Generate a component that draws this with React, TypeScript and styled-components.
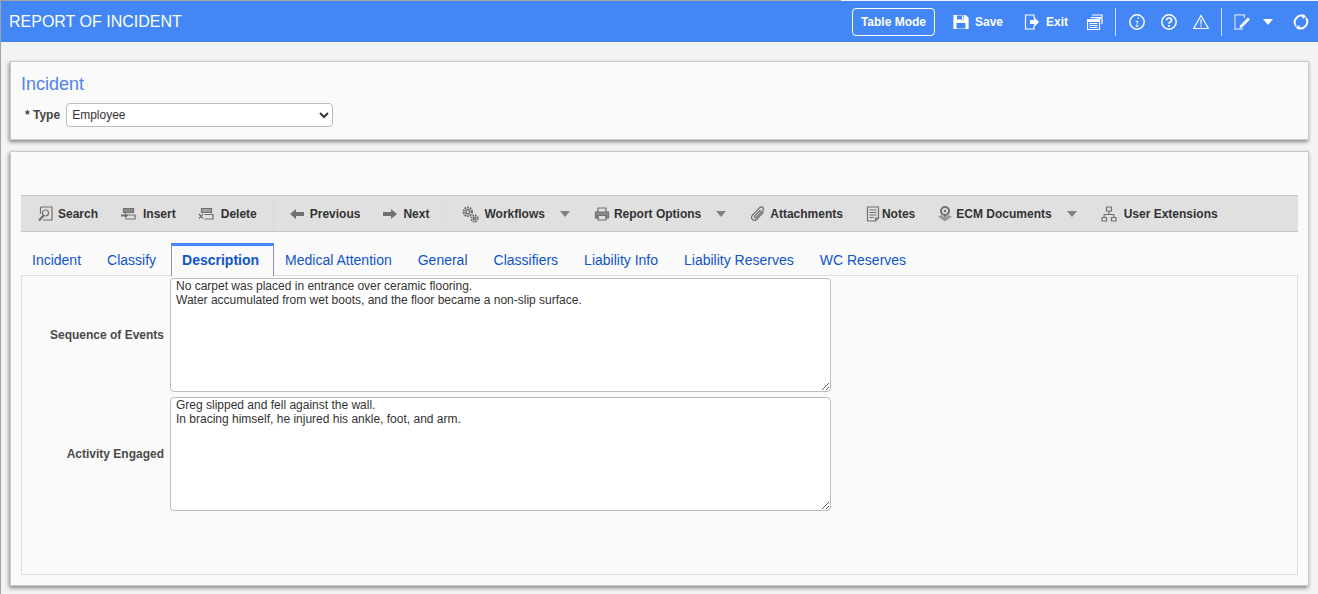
import React from "react";
import styled, { createGlobalStyle } from "styled-components";

const Global = createGlobalStyle`
  html, body { margin: 0; padding: 0; height: 100%; background: #f2f3f5; overflow: hidden; }
  body { font-family: "Liberation Sans", Arial, sans-serif; }
`;

const Page = styled.div`
  position: relative;
  height: 594px;
  box-sizing: border-box;
  border-left: 1px solid #a3a3a3;
  padding-top: 1px;
  background: #f2f3f5;
  &::before {
    content: "";
    position: absolute;
    left: 0;
    top: 0;
    width: 840px;
    height: 1px;
    background: #a3a3a3;
  }
`;

const Header = styled.header`
  height: 41px;
  background: #4287f5;
  display: flex;
  align-items: center;
  justify-content: space-between;
  color: #fff;
`;
const Title = styled.h1`
  margin: 0 0 0 8px;
  font-size: 16px;
  font-weight: 400;
  letter-spacing: 0;
`;
const HeaderTools = styled.div`
  display: flex;
  align-items: center;
  padding-right: 9px;
`;
const ModeButton = styled.button`
  box-sizing: border-box;
  width: 83px;
  height: 28px;
  padding: 0;
  margin-right: 18px;
  border: 1px solid #fff;
  border-radius: 4px;
  background: transparent;
  color: #fff;
  font: 700 12px "Liberation Sans", Arial, sans-serif;
`;
const HeaderAction = styled.span<{ $mr: number }>`
  display: flex;
  align-items: center;
  gap: 6px;
  margin-right: ${(p) => p.$mr}px;
  font-size: 12px;
  font-weight: 700;
`;
const HeaderDivider = styled.span<{ $mr: number }>`
  width: 1px;
  height: 28px;
  background: #cfe0fb;
  margin-right: ${(p) => p.$mr}px;
`;
const WhiteCaret = styled.span`
  width: 0;
  height: 0;
  margin-right: 20px;
  border-left: 5px solid transparent;
  border-right: 5px solid transparent;
  border-top: 6px solid #fff;
`;

const Panel = styled.section<{ $top: number }>`
  box-sizing: border-box;
  margin: ${(p) => p.$top}px 9px 0 9px;
  background: #fafafa;
  border: 1px solid #c9c9c9;
  box-shadow: -1px 2px 4px rgba(0, 0, 0, 0.45);
`;
const TypePanel = styled(Panel)`
  height: 79px;
  padding: 12px 10px 0;
`;
const MainPanel = styled(Panel)`
  height: 435px;
  padding: 43px 10px 0;
`;
const Heading = styled.h2`
  margin: 0;
  font-size: 18px;
  line-height: 20px;
  font-weight: 400;
  color: #4f83ea;
`;
const TypeRow = styled.div`
  display: flex;
  align-items: center;
  margin-top: 9px;
  padding-left: 4px;
`;
const TypeLabel = styled.label`
  font-size: 12px;
  font-weight: 700;
  color: #444;
  margin-right: 6px;
`;
const TypeSelect = styled.select`
  box-sizing: border-box;
  width: 267px;
  height: 24px;
  padding: 0 1px;
  border: 1px solid #bdbdbd;
  border-radius: 4px;
  background: #fff;
  color: #333;
  font: 12px "Liberation Sans", Arial, sans-serif;
`;

const Toolbar = styled.div`
  box-sizing: border-box;
  height: 37px;
  display: flex;
  align-items: center;
  padding-left: 5px;
  background: #e0e0e0;
  border-top: 1px solid #c6c6c6;
  border-bottom: 1px solid #c6c6c6;
`;
const Tool = styled.span`
  display: flex;
  align-items: center;
  padding: 0 11px;
  font-size: 12px;
  font-weight: 700;
  color: #333;
  white-space: nowrap;
`;
const ToolIcon = styled.span<{ $w: number }>`
  display: flex;
  width: ${(p) => p.$w}px;
`;
const ToolDivider = styled.span`
  width: 1px;
  height: 34px;
  margin: 0 4px 0 5px;
  background: #d8dadd;
`;
const GrayCaret = styled.span`
  width: 0;
  height: 0;
  margin: 1px 13px 0 4px;
  border-left: 5px solid transparent;
  border-right: 5px solid transparent;
  border-top: 6px solid #808080;
`;

const Tabs = styled.nav`
  display: flex;
  align-items: flex-end;
  height: 32px;
  margin-top: 11px;
`;
const Tab = styled.a<{ $active?: boolean }>`
  box-sizing: border-box;
  height: ${(p) => (p.$active ? 33 : 32)}px;
  margin-right: ${(p) => (p.$active ? 0 : 4)}px;
  margin-bottom: ${(p) => (p.$active ? -1 : 0)}px;
  padding: ${(p) => (p.$active ? "6px 14px 0 10px" : "9px 11px 0")};
  font-size: 14px;
  line-height: 16px;
  font-weight: ${(p) => (p.$active ? 700 : 400)};
  color: #0f55c8;
  background: ${(p) => (p.$active ? "#fafafa" : "transparent")};
  border-top: ${(p) => (p.$active ? "3px solid #4287f5" : "none")};
  border-left: ${(p) => (p.$active ? "1px solid #8496ad" : "none")};
  border-right: ${(p) => (p.$active ? "1px solid #8496ad" : "none")};
  position: relative;
`;
const TabBody = styled.div`
  box-sizing: border-box;
  height: 300px;
  padding-top: 2px;
  border: 1px solid #d6dfe8;
  display: grid;
  grid-template-columns: 148px 661px;
  grid-auto-rows: 114px;
  row-gap: 5px;
  align-items: center;
`;
const FieldLabel = styled.label`
  padding-right: 6px;
  text-align: right;
  font-size: 12px;
  font-weight: 700;
  color: #4a4a4a;
`;
const Memo = styled.textarea`
  box-sizing: border-box;
  display: block;
  width: 661px;
  height: 114px;
  padding: 0 5px;
  border: 1px solid #bdbdbd;
  border-radius: 4px;
  background: #fff;
  color: #333;
  font: 12px/14px "Liberation Sans", Arial, sans-serif;
  outline: none;
`;

const Glyph = styled.svg<{ $c: string }>`
  display: block;
  flex: none;
  fill: none;
  stroke: ${(p) => p.$c};
  stroke-width: 1.2;
`;

type IconProps = { c: string; children: React.ReactNode; size?: number };
const I = ({ c, children, size = 16 }: IconProps) => (
  <Glyph $c={c} width={size} height={size} viewBox="0 0 16 16">
    {children}
  </Glyph>
);
const W = "#fff";
const G = "#707070";

const SaveIcon = () => (
  <I c={W}>
    <path d="M1 1.5h11.5L15 4v10.5H1z" fill={W} />
    <path d="M4 1.5h7v4H4z" fill="#4287f5" stroke="none" />
    <path d="M3.5 9h9v5.5h-9z" fill="#4287f5" stroke="none" />
    <path d="M9 2.3h1.5v2.6H9z" fill={W} stroke="none" />
  </I>
);
const ExitIcon = () => (
  <I c={W}>
    <path d="M10 4V1H1.500v14H10v-3" />
    <path d="M6 6h4V3l5 5-5 5v-3H6z" fill={W} stroke="none" />
  </I>
);
const CopyIcon = () => (
  <I c={W}>
    <path d="M5 1h10v9" />
    <path d="M3.500 3.500h10v1.500" fill={W} />
    <path d="M.5 5.500h12v10H.5z" />
    <path d="M.5 5.500h12v2H.5z" fill={W} />
    <path d="M2.500 9.500h8M2.500 11.500h8M2.500 13.500h8" />
  </I>
);
const InfoIcon = () => (
  <I c={W}>
    <circle cx="8" cy="8" r="7.200" strokeWidth="1.500" />
    <path d="M8.700 3.200h1.300v1.500H8.500zM6.500 7h2.700l-1.100 4.800H9.500l-.2 1H6.500l.2-1h.6l.9-3.800h-1z" fill={W} stroke="none" />
  </I>
);
const HelpIcon = () => (
  <I c={W}>
    <circle cx="8" cy="8" r="7.200" strokeWidth="1.500" />
    <path d="M5.500 6.300C5.500 4.800 6.600 4 8 4s2.600.8 2.600 2.200c0 1.800-2.600 1.800-2.600 3.600" strokeWidth="1.700" />
    <path d="M7.100 11h1.800v1.800H7.100z" fill={W} stroke="none" />
  </I>
);
const WarnIcon = () => (
  <I c={W}>
    <path d="M8 1.500 15.300 14.500H.7z" />
    <path d="M7.300 5.500h1.400L8.400 11h-.8zM7.300 11.700h1.400v1.400H7.300z" fill={W} stroke="none" />
  </I>
);
const EditIcon = () => (
  <I c={W}>
    <path d="M10.500 4V.8H1v14.400h8" stroke="#cfe0fb" />
    <path d="M5.500 14.500l.5-3L14 3.500l2 2-8 8z" fill={W} stroke="none" />
  </I>
);
const RefreshIcon = () => (
  <I c={W}>
    <path d="M3 12A6.500 6.500 0 0 1 11 2.300" strokeWidth="2" />
    <path d="M13 4A6.500 6.500 0 0 1 5 13.700" strokeWidth="2" />
    <path d="M9.500 0l4 2.500-4 2.500zM6.500 11l-4 2.500 4 2.500z" fill={W} stroke="none" />
  </I>
);

const SearchIcon = () => (
  <I c={G}>
    <path d="M3.500 1h11.500v13H6" />
    <circle cx="8.500" cy="7" r="3" />
    <path d="M6.500 9.500 2 14.500" strokeWidth="2" />
    <path d="M3.500 1v7" />
  </I>
);
const InsertIcon = () => (
  <I c={G}>
    <path d="M3.500 2.500h10v4h-10z" fill="#8a8a8a" />
    <path d="M6.500 9h8.500v4H5" />
    <path d="M1 8.500h4V6.500l3 3-3 3v-2H1z" fill={G} stroke="none" />
  </I>
);
const DeleteIcon = () => (
  <I c={G}>
    <path d="M3.500 2.500h10v4h-10z" fill="#a0a0a0" />
    <path d="M6.500 8.500h8.500v4.500H6.500" />
    <path d="M1 8l4 4.500M5 8l-4 4.500" />
  </I>
);
const BackIcon = () => (
  <I c={G}>
    <path d="M1 8l6-5v3h8v4H7v3z" fill={G} stroke="none" />
  </I>
);
const ForwardIcon = () => (
  <I c={G}>
    <path d="M15 8 9 3v3H1v4h8v3z" fill={G} stroke="none" />
  </I>
);
const GearsIcon = () => (
  <I c={G} size={18}>
    <circle cx="6" cy="6" r="3.800" strokeWidth="1.800" strokeDasharray="1.600 .8" />
    <circle cx="6" cy="6" r="1.800" />
    <circle cx="12" cy="12" r="2.800" strokeWidth="1.800" strokeDasharray="1.400 .8" />
    <circle cx="12" cy="12" r="1" />
  </I>
);
const PrinterIcon = () => (
  <I c={G}>
    <path d="M4 6V2h8v4" />
    <path d="M1.500 6h13v6H12V9.500H4V12H1.500z" fill="#8a8a8a" />
    <path d="M4 9.500h8V14H4z" />
  </I>
);
const ClipIcon = () => (
  <I c={G}>
    <path d="M13.500 6 7 13c-1.500 1.500-3.500 1.500-4.600.4C1.300 12.300 1.400 10.400 2.700 9l7-7.300c1-1 2.300-1 3.100-.2.900.9.800 2.100-.1 3L6.300 11.300c-.5.500-1.200.5-1.600.1-.4-.4-.3-1 .2-1.600L10.500 4" />
  </I>
);
const NotesIcon = () => (
  <I c={G}>
    <path d="M2.500 1h11v11l-3 3h-8z" />
    <path d="M4.500 4h7M4.500 6.500h7M4.500 9h7M4.500 11.500h4" />
    <path d="M13.500 12h-3v3" />
  </I>
);
const EcmIcon = () => (
  <I c={G}>
    <circle cx="8" cy="5" r="4" strokeWidth="2" />
    <circle cx="8" cy="5" r="1.200" fill={G} stroke="none" />
    <path d="M8 9v4" strokeWidth="1.500" />
    <path d="M1 10.500l4-1.500 3 3 3-3 4 1.500L8 15.500z" fill="#9a9a9a" stroke="none" />
  </I>
);
const TreeIcon = () => (
  <I c={G}>
    <path d="M5.500 1h5v4h-5zM1 11.500h4.500v3.500H1zM10.500 11.500H15v3.500h-4.500z" />
    <path d="M8 5v3.500M3.200 11.500v-3h9.600v3" />
  </I>
);

const tabs = ["Incident", "Classify", "Description", "Medical Attention", "General", "Classifiers", "Liability Info", "Liability Reserves", "WC Reserves"];

export default function App() {
  return (
    <Page>
      <Global />
      <Header>
        <Title>REPORT OF INCIDENT</Title>
        <HeaderTools>
          <ModeButton>Table Mode</ModeButton>
          <HeaderAction $mr={21}><SaveIcon />Save</HeaderAction>
          <HeaderAction $mr={19}><ExitIcon />Exit</HeaderAction>
          <HeaderAction $mr={12}><CopyIcon /></HeaderAction>
          <HeaderDivider $mr={13} />
          <HeaderAction $mr={16}><InfoIcon /></HeaderAction>
          <HeaderAction $mr={16}><HelpIcon /></HeaderAction>
          <HeaderAction $mr={12}><WarnIcon /></HeaderAction>
          <HeaderDivider $mr={12} />
          <HeaderAction $mr={13}><EditIcon /></HeaderAction>
          <WhiteCaret />
          <HeaderAction $mr={0}><RefreshIcon /></HeaderAction>
        </HeaderTools>
      </Header>

      <TypePanel $top={19}>
        <Heading>Incident</Heading>
        <TypeRow>
          <TypeLabel>* Type</TypeLabel>
          <TypeSelect defaultValue="Employee">
            <option>Employee</option>
            <option>Non-Employee</option>
          </TypeSelect>
        </TypeRow>
      </TypePanel>

      <MainPanel $top={11}>
        <Toolbar>
          <Tool><ToolIcon $w={21}><SearchIcon /></ToolIcon>Search</Tool>
          <Tool><ToolIcon $w={23}><InsertIcon /></ToolIcon>Insert</Tool>
          <Tool><ToolIcon $w={23}><DeleteIcon /></ToolIcon>Delete</Tool>
          <ToolDivider />
          <Tool><ToolIcon $w={21}><BackIcon /></ToolIcon>Previous</Tool>
          <Tool><ToolIcon $w={21}><ForwardIcon /></ToolIcon>Next</Tool>
          <ToolDivider />
          <Tool><ToolIcon $w={23}><GearsIcon /></ToolIcon>Workflows</Tool>
          <GrayCaret />
          <Tool><ToolIcon $w={20}><PrinterIcon /></ToolIcon>Report Options</Tool>
          <GrayCaret />
          <Tool><ToolIcon $w={20}><ClipIcon /></ToolIcon>Attachments</Tool>
          <Tool><ToolIcon $w={17}><NotesIcon /></ToolIcon>Notes</Tool>
          <Tool><ToolIcon $w={19}><EcmIcon /></ToolIcon>ECM Documents</Tool>
          <GrayCaret />
          <Tool><ToolIcon $w={23}><TreeIcon /></ToolIcon>User Extensions</Tool>
        </Toolbar>
        <Tabs>
          {tabs.map((t) => (
            <Tab key={t} $active={t === "Description"}>{t}</Tab>
          ))}
        </Tabs>
        <TabBody>
          <FieldLabel>Sequence of Events</FieldLabel>
          <Memo defaultValue={"No carpet was placed in entrance over ceramic flooring.\nWater accumulated from wet boots, and the floor became a non-slip surface."} />
          <FieldLabel>Activity Engaged</FieldLabel>
          <Memo defaultValue={"Greg slipped and fell against the wall.\nIn bracing himself, he injured his ankle, foot, and arm."} />
        </TabBody>
      </MainPanel>
    </Page>
  );
}
